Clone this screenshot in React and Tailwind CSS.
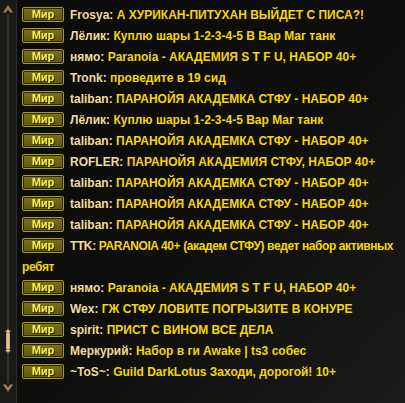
import React from "react";

const lines = [
  ["Frosya", "А ХУРИКАН-ПИТУХАН ВЫЙДЕТ С ПИСА?!"],
  ["Лёлик", "Куплю шары 1-2-3-4-5 В Вар Маг танк"],
  ["нямо", "Paranoia - АКАДЕМИЯ S T F U, НАБОР 40+"],
  ["Tronk", "проведите в 19 сид"],
  ["taliban", "ПАРАНОЙЯ АКАДЕМКА СТФУ - НАБОР 40+"],
  ["Лёлик", "Куплю шары 1-2-3-4-5 Вар Маг танк"],
  ["taliban", "ПАРАНОЙЯ АКАДЕМКА СТФУ - НАБОР 40+"],
  ["ROFLER", "ПАРАНОЙЯ АКАДЕМИЯ СТФУ, НАБОР 40+"],
  ["taliban", "ПАРАНОЙЯ АКАДЕМКА СТФУ - НАБОР 40+"],
  ["taliban", "ПАРАНОЙЯ АКАДЕМКА СТФУ - НАБОР 40+"],
  ["taliban", "ПАРАНОЙЯ АКАДЕМКА СТФУ - НАБОР 40+"],
  ["TTK", "PARANOIA 40+ (академ СТФУ) ведет набор активных", "ребят"],
  ["нямо", "Paranoia - АКАДЕМИЯ S T F U, НАБОР 40+"],
  ["Wex", "ГЖ СТФУ ЛОВИТЕ ПОГРЫЗИТЕ В КОНУРЕ"],
  ["spirit", "ПРИСТ С ВИНОМ ВСЕ ДЕЛА"],
  ["Меркурий", "Набор в ги Awake | ts3 собес"],
  ["~ToS~", "Guild DarkLotus Заходи, дорогой! 10+"],
];

function Channel() {
  return (
    <span className="relative top-[-1px] mr-[6px] inline-flex h-[15px] w-[42px] items-center justify-center rounded-[2px] border border-[#a99a1e] bg-gradient-to-b from-[#7a7314] to-[#5d5810] align-middle text-[11px] leading-none tracking-normal text-[#fff04a] shadow-[inset_0_0_0_1px_#2a2806] [text-shadow:1px_1px_0_#2a2500]">
      Мир
    </span>
  );
}

function Chevron({ down }) {
  return (
    <svg width="12" height="10" viewBox="0 0 12 10" className={down ? "rotate-180" : ""}>
      <path d="M1 8.5 L6 1.5 L11 8.5 L8.5 8.5 L6 5.5 L3.5 8.5 Z" fill="#a88a62" stroke="#6a5236" strokeWidth="0.6" />
    </svg>
  );
}

export default function App() {
  return (
    <div className="flex h-[403px] w-[405px] overflow-hidden bg-[#1a1a18] font-['Liberation_Sans',sans-serif] font-bold">
      {/* Scrollbar */}
      <div className="flex w-[16px] shrink-0 flex-col items-center pt-[4px] pb-[10px]">
        <Chevron />
        <div className="w-[2px] flex-1 bg-[#3a3223]" />
        <div className="flex h-[24px] w-[6px] flex-col items-center">
          <div className="h-0 w-0 border-x-[3px] border-b-[3px] border-x-transparent border-b-[#d9b77e]" />
          <div className="w-[4px] flex-1 rounded-sm bg-gradient-to-r from-[#b89868] via-[#f0d4a0] to-[#b89868]" />
          <div className="h-0 w-0 border-x-[3px] border-t-[3px] border-x-transparent border-t-[#d9b77e]" />
        </div>
        <div className="h-[30px] w-[2px] bg-[#3a3223]" />
        <Chevron down />
      </div>

      {/* Chat */}
      <div className="min-w-0 flex-1 border-l border-[#2c2c29] bg-gradient-to-br from-[#0b0b0b] via-[#0e0e0d] to-[#1a1a18] pl-[5px] pt-[5px]">
        {lines.map(([name, msg, rest], i) => (
          <div
            key={i}
            className={`whitespace-nowrap text-[12px] leading-[21px] text-[#f7d600] ${rest ? "tracking-[-0.4px]" : ""}`}
          >
            <Channel />
            <span className="text-[#efdc9c]">{name}: </span>
            {msg}
            {rest && (
              <>
                <br />
                {rest}
              </>
            )}
          </div>
        ))}
      </div>
    </div>
  );
}
